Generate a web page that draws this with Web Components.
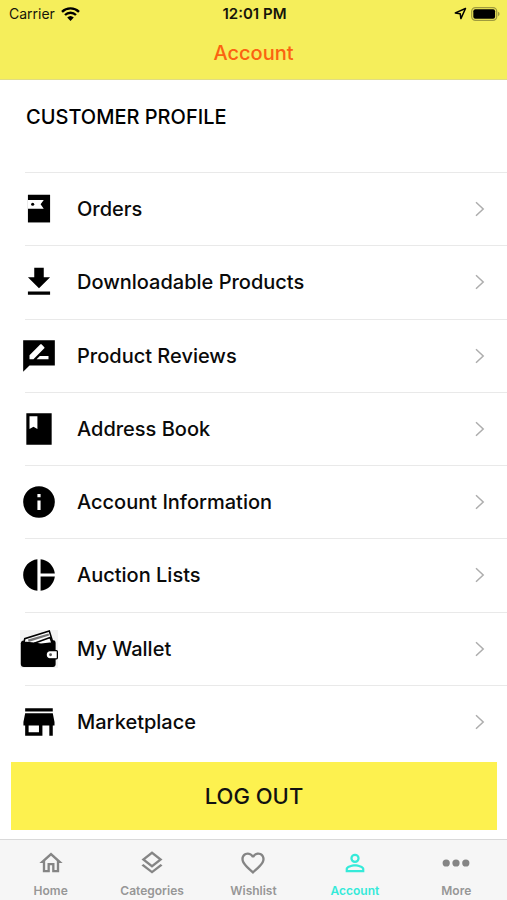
<!DOCTYPE html>
<html lang="en">
<head>
<meta charset="utf-8">
<meta name="viewport" content="width=device-width, initial-scale=1">
<title>Account</title>
<style>
    body {
        margin: 0;
        background: #fff;
        color: #000;
        font-family: Inter, "Liberation Sans", sans-serif;
    }
</style>
</head>
<body>
<account-page>
    <status-bar slot="header" carrier="Carrier" time="12:01 PM"></status-bar>
    <nav-title slot="header">Account</nav-title>
    <menu-row icon="orders">Orders</menu-row>
    <menu-row icon="download">Downloadable Products</menu-row>
    <menu-row icon="review">Product Reviews</menu-row>
    <menu-row icon="book">Address Book</menu-row>
    <menu-row icon="info">Account Information</menu-row>
    <menu-row icon="pie">Auction Lists</menu-row>
    <menu-row icon="wallet">My Wallet</menu-row>
    <menu-row icon="store">Marketplace</menu-row>
    <logout-button slot="footer">LOG OUT</logout-button>
    <tab-bar slot="footer">
        <tab-item icon="home">Home</tab-item>
        <tab-item icon="layers">Categories</tab-item>
        <tab-item icon="heart">Wishlist</tab-item>
        <tab-item icon="person" active>Account</tab-item>
        <tab-item icon="more">More</tab-item>
    </tab-bar>
</account-page>

<script>
const ICONS = {
    orders: `<path d="M5 3h14v17.500H5z"/><path fill="#fff" d="M5 6.300h10l-2 2.700 2 2.900H5z"/><circle cx="8" cy="9" r="1"/>`,
    download: `<path d="M19 9h-4V3H9v6H5l7 7 7-7zM5 18v2h14v-2z"/>`,
    review: `<path d="M22 2H2v20l4-4h16V2zM6 14v-2.470l6.880-6.880c.2-.2.51-.2.71 0l1.770 1.770c.2.2.2.51 0 .71L8.470 14H6zm12 0h-7.500l2-2H18z"/>`,
    book: `<path d="M4 2h16v20H4zM6 4v8l2.500-1.500L11 12V4z"/>`,
    info: `<path d="M12 2a10 10 0 1 0 0 20 10 10 0 0 0 0-20zm1 15h-2v-6h2zm0-8h-2V7h2z"/>`,
    pie: `<path d="M11 2v20c-5.070-.5-9-4.790-9-10s3.930-9.500 9-10zm2 0v9h9c-.47-4.740-4.240-8.520-9-9zm0 11v9c4.740-.47 8.500-4.250 9-9z"/>`,
    wallet: `<path fill="#f3f3f3" d="M0 0h24v24H0z"/>
        <path d="M1.500 6.800q-1 .4-1 1.500v13q0 2 2 2h18.500q1.500 0 1.500-1.500V8q0-1.500-1.500-1.500z"/>
        <path fill="#fff" stroke="#000" stroke-width="1" d="M2.500 7.800 3 5.500 18.500.7l2 6.300-10 1.600z"/>
        <path d="M5 6 18 2.200l.4 1.300L5.500 7.500z" opacity=".55"/>
        <path fill="#fff" stroke="#000" stroke-width="1" d="M9 8.400 19 4.700l1.300 3.600-7 .7z"/>
        <path fill="#fff" stroke="#000" stroke-width=".8" d="M18.500 13H23q.6 0 .6.600v4q0 .6-.6.600h-4.500q-2-.5-2-2.600t2-2.600z"/>
        <circle cx="19.300" cy="15.600" r=".9" fill="#555"/>`,
    store: `<path transform="translate(-1.100 -1.100) scale(1.090)" d="M20 4H4v2h16zm1 10v-2l-1-5H4l-1 5v2h1v6h10v-6h4v6h2v-6zm-9 4H6v-4h6z"/>`,
    home: `<path d="m12 5.690 5 4.500V18h-2v-6H9v6H7v-7.810zM12 3 2 12h3v8h6v-6h2v6h6v-8h3z"/>`,
    layers: `<path d="m12 18.540-7.380-5.730L3 14.070l9 7 9-7-1.630-1.270zM12 16l7.360-5.730L21 9l-9-7-9 7 1.630 1.270zm0-11.470L17.740 9 12 13.470 6.260 9z"/>`,
    heart: `<path d="M16.500 3c-1.740 0-3.410.81-4.500 2.090C10.910 3.810 9.240 3 7.500 3 4.420 3 2 5.420 2 8.500c0 3.780 3.400 6.860 8.550 11.540L12 21.350l1.450-1.320C18.600 15.360 22 12.280 22 8.500 22 5.420 19.580 3 16.500 3zm-4.400 15.550-.1.1-.1-.1C7.140 14.240 4 11.390 4 8.500 4 6.500 5.500 5 7.500 5c1.540 0 3.040.99 3.570 2.360h1.870C13.460 5.990 14.960 5 16.500 5c2 0 3.500 1.500 3.500 3.500 0 2.890-3.140 5.740-7.900 10.050z"/>`,
    person: `<path d="M12 5.900a2.100 2.100 0 1 1 0 4.200 2.100 2.100 0 0 1 0-4.200m0 9c2.970 0 6.100 1.460 6.100 2.100v1.100H5.900V17c0-.64 3.130-2.100 6.100-2.100M12 4a4 4 0 1 0 0 8 4 4 0 0 0 0-8zm0 9c-2.670 0-8 1.340-8 4v3h16v-3c0-2.660-5.330-4-8-4z"/>`,
    more: `<circle cx="3.600" cy="12" r="3.100"/><circle cx="12" cy="12" r="3.100"/><circle cx="20.400" cy="12" r="3.100"/>`
};

function svgIcon(name) {
    return `<svg viewBox="0 0 24 24" fill="currentColor" fill-rule="evenodd" aria-hidden="true">${ICONS[name] || ''}</svg>`;
}

class AccountPage extends HTMLElement {
    constructor() {
        super();
        this.attachShadow({ mode: 'open' });
        this.shadowRoot.innerHTML = `
            <style>
                :host {
                    display: flex;
                    flex-direction: column;
                    min-height: 100vh;
                }
                header {
                    background: #f5ee5b;
                    border-bottom: 1px solid #e0dc84;
                }
                main {
                    flex: 1;
                    display: flex;
                    flex-direction: column;
                }
                h2 {
                    margin: 0;
                    padding: 25px 26px 43px;
                    font-size: 20px;
                    line-height: 24px;
                    font-weight: 500;
                }
                nav {
                    flex: 1;
                    display: grid;
                    grid-auto-rows: 1fr;
                }
            </style>
            <header><slot name="header"></slot></header>
            <main>
                <h2>CUSTOMER PROFILE</h2>
                <nav aria-label="Customer profile"><slot></slot></nav>
            </main>
            <footer><slot name="footer"></slot></footer>
        `;
    }
}

class StatusBar extends HTMLElement {
    constructor() {
        super();
        this.attachShadow({ mode: 'open' });
    }
    connectedCallback() {
        this.shadowRoot.innerHTML = `
            <style>
                :host {
                    display: grid;
                    grid-template-columns: 1fr auto 1fr;
                    align-items: center;
                    height: 27px;
                    padding: 0 7px 0 9px;
                    font-size: 14px;
                    color: #16150a;
                }
                div {
                    display: flex;
                    align-items: center;
                    gap: 6px;
                }
                .right {
                    justify-content: flex-end;
                    gap: 4px;
                }
                b {
                    font-size: 15px;
                    font-weight: 600;
                }
                svg { display: block; }
            </style>
            <div>
                <span>${this.getAttribute('carrier')}</span>
                <svg width="19" height="14" viewBox="0 0 19 14" fill="none" stroke="#000" stroke-width="2.400" aria-hidden="true">
                    <path d="M1 4.800a12.300 12.300 0 0 1 17 0M4 8a8 8 0 0 1 11 0"/>
                    <path fill="#000" stroke="none" d="M9.500 14 6.200 10.600a4.800 4.800 0 0 1 6.600 0z"/>
                </svg>
            </div>
            <b>${this.getAttribute('time')}</b>
            <div class="right">
                <svg width="13" height="13" viewBox="0 0 13 13" fill="none" stroke="#000" stroke-width="1.500" stroke-linejoin="round" aria-hidden="true">
                    <path d="M11.500 1.500 1.300 5.900l4.900.8.7 4.900z"/>
                </svg>
                <svg width="29" height="14" viewBox="0 0 29 14" aria-hidden="true">
                    <rect x=".7" y=".7" width="25" height="12.600" rx="3.800" fill="none" stroke="#9f9b3e" stroke-width="1.300"/>
                    <rect x="2.300" y="2.300" width="21.800" height="9.400" rx="2"/>
                    <path fill="#9f9b3e" d="M27 4.800q1.600.6 1.600 2.200t-1.600 2.200z"/>
                </svg>
            </div>
        `;
    }
}

class NavTitle extends HTMLElement {
    constructor() {
        super();
        this.attachShadow({ mode: 'open' });
        this.shadowRoot.innerHTML = `
            <style>
                :host { display: block; }
                h1 {
                    margin: 0;
                    font-size: 20px;
                    line-height: 52px;
                    font-weight: 500;
                    text-align: center;
                    color: #fb6310;
                }
            </style>
            <h1><slot></slot></h1>
        `;
    }
}

class MenuRow extends HTMLElement {
    constructor() {
        super();
        this.attachShadow({ mode: 'open' });
    }
    connectedCallback() {
        this.shadowRoot.innerHTML = `
            <style>
                :host {
                    display: flex;
                    flex-direction: column;
                    min-height: 64px;
                }
                .rule {
                    height: 1px;
                    margin-left: 25px;
                    background: #e9e9e9;
                }
                a {
                    flex: 1;
                    display: flex;
                    align-items: center;
                    padding: 0 22px 0 20px;
                    color: #0a0a0a;
                    text-decoration: none;
                    font-size: 20px;
                    line-height: 24px;
                    font-weight: 500;
                }
                .icon {
                    width: 38px;
                    height: 38px;
                    margin-right: 19px;
                    color: #000;
                }
                .label { flex: 1; }
                svg { display: block; }
            </style>
            <div class="rule"></div>
            <a href="#${this.getAttribute('icon')}">
                <span class="icon">${svgIcon(this.getAttribute('icon'))}</span>
                <span class="label"><slot></slot></span>
                <svg width="10" height="16" viewBox="0 0 10 16" fill="none" stroke="#adadad" stroke-width="1.500" aria-hidden="true">
                    <path d="M1 1.200 8.200 8 1 14.800"/>
                </svg>
            </a>
        `;
    }
}

class LogoutButton extends HTMLElement {
    constructor() {
        super();
        this.attachShadow({ mode: 'open' });
        this.shadowRoot.innerHTML = `
            <style>
                :host {
                    display: block;
                    padding: 4px 10px 9px 11px;
                }
                button {
                    display: block;
                    width: 100%;
                    height: 68px;
                    border: 0;
                    background: #fdf14f;
                    color: #111;
                    font: inherit;
                    font-size: 22px;
                    font-weight: 500;
                    cursor: pointer;
                }
            </style>
            <button type="button"><slot></slot></button>
        `;
    }
}

class TabBar extends HTMLElement {
    constructor() {
        super();
        this.attachShadow({ mode: 'open' });
        this.shadowRoot.innerHTML = `
            <style>
                :host { display: block; }
                nav {
                    display: grid;
                    grid-template-columns: repeat(5, 1fr);
                    background: #f6f6f6;
                    border-top: 1px solid #d9d9d9;
                }
            </style>
            <nav aria-label="Main"><slot></slot></nav>
        `;
    }
}

class TabItem extends HTMLElement {
    constructor() {
        super();
        this.attachShadow({ mode: 'open' });
    }
    connectedCallback() {
        this.shadowRoot.innerHTML = `
            <style>
                :host {
                    display: block;
                    --icon-color: #858585;
                    --label-color: #979797;
                }
                :host([active]) {
                    --icon-color: #35ead9;
                    --label-color: #35ead9;
                }
                a {
                    display: flex;
                    flex-direction: column;
                    align-items: center;
                    gap: 6px;
                    padding: 9px 0 2px;
                    color: var(--label-color);
                    font-size: 12px;
                    line-height: 15px;
                    font-weight: 600;
                    text-decoration: none;
                }
                svg {
                    display: block;
                    width: 28px;
                    height: 28px;
                    color: var(--icon-color);
                }
            </style>
            <a href="#${this.getAttribute('icon')}">
                ${svgIcon(this.getAttribute('icon'))}
                <span><slot></slot></span>
            </a>
        `;
        if (this.hasAttribute('active')) {
            this.shadowRoot.querySelector('a').setAttribute('aria-current', 'page');
        }
    }
}

customElements.define('account-page', AccountPage);
customElements.define('status-bar', StatusBar);
customElements.define('nav-title', NavTitle);
customElements.define('menu-row', MenuRow);
customElements.define('logout-button', LogoutButton);
customElements.define('tab-bar', TabBar);
customElements.define('tab-item', TabItem);
</script>
</body>
</html>
